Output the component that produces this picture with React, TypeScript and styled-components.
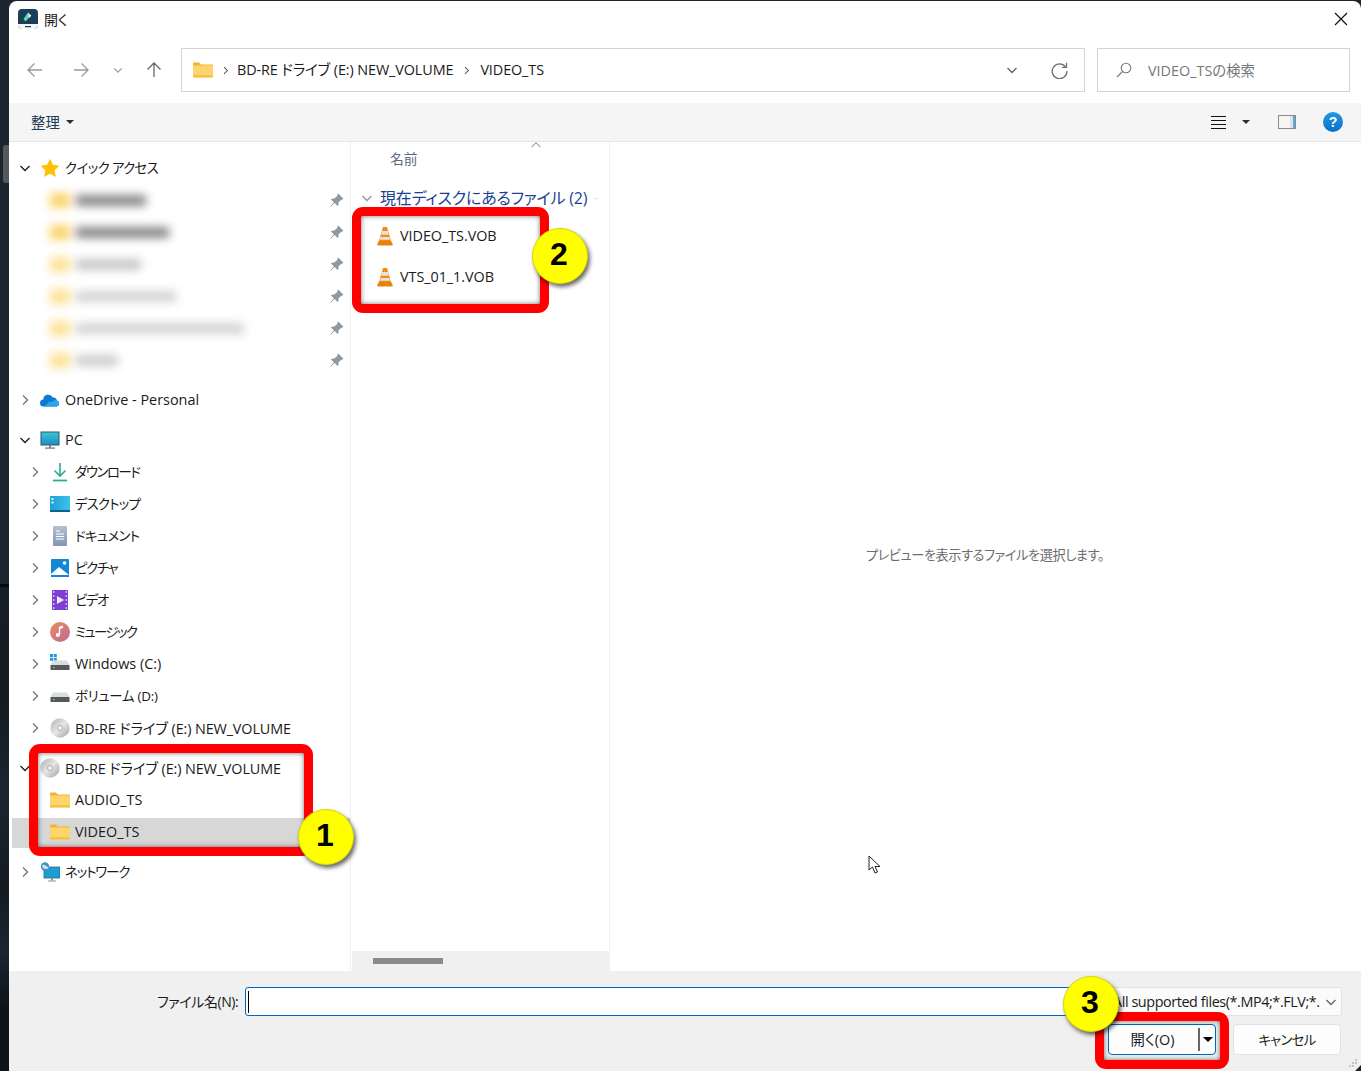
import React from "react";
import styled, { createGlobalStyle } from "styled-components";
import { BsPinAngleFill } from "react-icons/bs";

const GlobalStyle = createGlobalStyle`
  html, body {
    margin: 0;
    padding: 0;
    background: #1b2631;
  }
  body {
    font-family: "Open Sans", "Noto Sans CJK JP", sans-serif;
    font-feature-settings: "palt";
    color: #1a1a1a;
  }
`;

const Page = styled.div`
  position: relative;
  box-sizing: border-box;
  width: 1361px;
  height: 1071px;
  overflow: hidden;
  padding: 1px 0 0 9px;
  background: linear-gradient(
    to bottom,
    #1b2631 0,
    #1b2631 584px,
    #05080a 584px,
    #05080a 587px,
    #171f26 587px,
    #141b21 700px,
    #1b2631 790px,
    #141b21 890px,
    #1b2631 950px,
    #0d1319 1010px
  );
`;

const StripThumb = styled.div`
  position: absolute;
  left: 3px;
  top: 145px;
  width: 6px;
  height: 38px;
  border-radius: 3px 0 0 3px;
  background: #54595e;
`;

const Window = styled.div`
  display: flex;
  flex-direction: column;
  height: 1070px;
  background: #fff;
  border-radius: 8px 8px 0 0;
  overflow: hidden;
`;

const TitleBar = styled.div`
  display: flex;
  align-items: center;
  height: 36px;
  padding: 0 13px 0 9px;
  flex-shrink: 0;
`;

const TitleText = styled.span`
  margin-left: 6px;
  padding-bottom: 1px;
  font-size: 14px;
  flex: 1;
`;

const NavBar = styled.div`
  display: flex;
  align-items: center;
  height: 66px;
  flex-shrink: 0;
  padding: 0 11px 0 3px;
`;

const NavButton = styled.div<{ $w: number }>`
  display: flex;
  align-items: center;
  justify-content: center;
  width: ${({ $w }) => $w}px;
  height: 44px;
  flex-shrink: 0;
`;

const AddressBox = styled.div`
  display: flex;
  align-items: center;
  box-sizing: border-box;
  width: 904px;
  height: 44px;
  margin-left: 5px;
  padding: 0 16px 0 11px;
  border: 1px solid #d4d4d4;
  font-size: 14.4px;
`;

const Crumb = styled.span<{ $lift: number }>`
  white-space: nowrap;
  padding-bottom: ${({ $lift }) => $lift}px;
  letter-spacing: -0.1px;
`;

const CrumbSep = styled.span<{ $w: number }>`
  display: flex;
  width: ${({ $w }) => $w}px;
  justify-content: center;
`;

const AddressActions = styled.div`
  display: flex;
  align-items: center;
  gap: 33px;
  margin-left: auto;
`;

const SearchBox = styled.div`
  display: flex;
  align-items: center;
  box-sizing: border-box;
  width: 253px;
  height: 44px;
  margin-left: 12px;
  padding-left: 18px;
  gap: 16px;
  border: 1px solid #d4d4d4;
  font-size: 14.4px;
  color: #777;
`;

const SearchHint = styled.span`
  padding-bottom: 2px;
`;

const Toolbar = styled.div`
  display: flex;
  align-items: center;
  box-sizing: border-box;
  height: 39px;
  flex-shrink: 0;
  padding: 0 18px 0 22px;
  background: #f5f5f5;
  border-bottom: 1px solid #e6e6e6;
`;

const OrganizeLabel = styled.span`
  font-size: 14.4px;
  padding-bottom: 2px;
  color: #223a52;
`;

const Caret = styled.span<{ $color?: string; $size?: number; $before?: number; $after?: number }>`
  display: inline-block;
  width: 0;
  height: 0;
  margin-left: ${({ $before = 0 }) => $before}px;
  margin-right: ${({ $after = 0 }) => $after}px;
  border-left: ${({ $size = 4 }) => $size}px solid transparent;
  border-right: ${({ $size = 4 }) => $size}px solid transparent;
  border-top: ${({ $size = 4 }) => $size}px solid ${({ $color = "#1f3347" }) => $color};
`;

const ToolbarRight = styled.div`
  display: flex;
  align-items: center;
  margin-left: auto;
`;

const HelpSlot = styled.span`
  display: flex;
  margin-left: 27px;
`;

const Main = styled.div`
  flex: 1;
  display: flex;
  min-height: 0;
`;

const Sidebar = styled.nav`
  box-sizing: border-box;
  width: 342px;
  flex-shrink: 0;
  padding-top: 10px;
  border-right: 1px solid #f0f0f0;
`;

const Group = styled.div`
  margin-bottom: 8px;
`;

const Row = styled.div<{ $level: number; $selected?: boolean }>`
  display: flex;
  align-items: center;
  height: 32px;
  margin-left: 3px;
  padding: 0 6px 0 ${({ $level }) => ($level === 1 ? 7 : 17)}px;
  background: ${({ $selected }) =>
    $selected
      ? "linear-gradient(to bottom, transparent 2px, #d7d7d7 2px)"
      : "transparent"};
`;

const ChevronSlot = styled.span`
  display: flex;
  align-items: center;
  justify-content: center;
  width: 12px;
  height: 12px;
  margin-right: 9px;
  flex-shrink: 0;
`;

const IconSlot = styled.span`
  display: flex;
  align-items: center;
  justify-content: center;
  width: 20px;
  height: 20px;
  margin-right: 5px;
  flex-shrink: 0;
`;

const RowLabel = styled.span<{ $kana?: number; $track?: number }>`
  font-size: ${({ $kana }) => ($kana === undefined ? 14.4 : 13.4)}px;
  white-space: nowrap;
  padding-bottom: ${({ $kana, $track }) => ($kana === undefined && $track === undefined ? 1 : 2)}px;
  letter-spacing: ${({ $kana, $track = 0 }) => $kana ?? $track}px;
`;

const PinSlot = styled.span`
  display: flex;
  margin-left: auto;
  color: #8f9aa3;
`;

const BlurStack = styled.div`
  display: flex;
  align-items: center;
  gap: 6px;
  filter: blur(5px);
`;

const BlurFolder = styled.span<{ $fade: number }>`
  width: 20px;
  height: 15px;
  background: #fbd46d;
  opacity: ${({ $fade }) => $fade};
`;

const BlurText = styled.span<{ $w: number; $fade: number }>`
  width: ${({ $w }) => $w}px;
  height: 11px;
  background: #808080;
  opacity: ${({ $fade }) => $fade};
`;

const FilePanel = styled.section`
  display: flex;
  flex-direction: column;
  box-sizing: border-box;
  width: 259px;
  flex-shrink: 0;
  border-right: 1px solid #f0f0f0;
`;

const ColumnHeader = styled.div`
  position: relative;
  display: flex;
  align-items: center;
  box-sizing: border-box;
  height: 34px;
  padding: 0 0 2px 39px;
  font-size: 13.8px;
  color: #5b6b7b;
  margin-bottom: 5px;
`;

const SortMark = styled.svg`
  position: absolute;
  left: 180px;
  top: 0;
`;

const GroupHeader = styled.div`
  display: flex;
  align-items: center;
  height: 34px;
  padding-left: 10px;
  font-size: 16px;
  color: #1c3f94;
  white-space: nowrap;
`;

const GroupTitle = styled.span`
  padding-bottom: 2px;
  letter-spacing: -0.18px;
`;

const GroupRule = styled.span`
  width: 3px;
  height: 1px;
  margin-left: 8px;
  background: #dcdcdc;
`;

const GroupChevron = styled.span`
  display: flex;
  width: 12px;
  margin-right: 7px;
`;

const FileRow = styled.div`
  display: flex;
  align-items: center;
  height: 41px;
  padding-left: 26px;
  font-size: 14.4px;
`;

const FileName = styled.span`
  margin-left: 7px;
  padding-bottom: 1px;
  letter-spacing: -0.05px;
`;

const FileSpacer = styled.div`
  flex: 1;
`;

const ScrollTrack = styled.div`
  display: flex;
  align-items: center;
  height: 20px;
  margin-left: 1px;
  background: #f0f0f0;
  padding-left: 21px;
`;

const ScrollThumb = styled.div`
  width: 70px;
  height: 6px;
  background: #8a8a8a;
`;

const PreviewPane = styled.section`
  flex: 1;
  display: flex;
  align-items: center;
  justify-content: center;
  padding: 0 0 4px 5px;
  margin-right: 6px;
  font-size: 13.2px;
  letter-spacing: -0.43px;
  color: #6d6d6d;
`;

const Footer = styled.footer`
  position: relative;
  box-sizing: border-box;
  height: 100px;
  flex-shrink: 0;
  padding: 16px 19px 0 148px;
  background: #f0f0f0;
`;

const FooterRow = styled.div`
  display: flex;
  align-items: center;
  justify-content: flex-end;
`;

const FieldLabel = styled.span`
  font-size: 14px;
  margin-right: 7px;
  padding-bottom: 2px;
  letter-spacing: -0.4px;
  white-space: nowrap;
`;

const NameInput = styled.div`
  flex: 1;
  box-sizing: border-box;
  height: 29px;
  display: flex;
  align-items: center;
  padding-left: 2px;
  background: #fff;
  border: 1px solid #0067c0;
  border-radius: 3px;
`;

const TextCaret = styled.span`
  width: 1px;
  height: 22px;
  background: #000;
`;

const FilterSelect = styled.div`
  box-sizing: border-box;
  display: flex;
  align-items: center;
  width: 237px;
  height: 29px;
  margin-left: 5px;
  padding: 0 4px 0 7px;
  background: #fbfbfb;
  border: 1px solid #e2e2e2;
  border-radius: 3px;
  font-size: 14.4px;
`;

const FilterText = styled.span`
  flex: 1;
  white-space: nowrap;
  letter-spacing: -0.42px;
`;

const ButtonRow = styled(FooterRow)`
  margin-top: 8px;
  padding-right: 1px;
  gap: 17px;
`;

const DialogButton = styled.div<{ $primary?: boolean }>`
  box-sizing: border-box;
  display: flex;
  align-items: center;
  justify-content: center;
  width: 108px;
  height: 31px;
  font-size: 14.4px;
  background: #fdfdfd;
  border: 1px solid ${({ $primary }) => ($primary ? "#0067c0" : "#e2e2e2")};
  border-radius: 4px;
`;

const CancelLabel = styled.span`
  padding-bottom: 2px;
  font-size: 13.4px;
  letter-spacing: -0.7px;
`;

const SplitLabel = styled.span`
  flex: 1;
  text-align: center;
  padding: 0 2px 2px 0;
`;

const SplitPart = styled.span`
  display: flex;
  align-items: center;
  justify-content: center;
  box-sizing: border-box;
  width: 17px;
  height: 23px;
  border-left: 2px solid #666;
`;

const ResizeGrip = styled.svg`
  position: absolute;
  right: 0;
  bottom: 0;
`;

const RedFrame = styled.div<{ $x: number; $y: number; $w: number; $h: number }>`
  position: absolute;
  box-sizing: border-box;
  left: ${({ $x }) => $x}px;
  top: ${({ $y }) => $y}px;
  width: ${({ $w }) => $w}px;
  height: ${({ $h }) => $h}px;
  border: 9px solid #ff0000;
  border-radius: 11px;
  box-shadow: inset 0 0 5px rgba(0, 0, 0, 0.55);
`;

const Badge = styled.div<{ $x: number; $y: number }>`
  position: absolute;
  box-sizing: border-box;
  left: ${({ $x }) => $x}px;
  top: ${({ $y }) => $y}px;
  width: 56px;
  height: 56px;
  padding: 0 2px 3px 0;
  display: flex;
  align-items: center;
  justify-content: center;
  border-radius: 50%;
  background: #ffff00;
  border: 1px solid #d8d800;
  box-shadow: 2px 3px 4px rgba(0, 0, 0, 0.6);
  font-family: "Liberation Sans", sans-serif;
  font-weight: 700;
  font-size: 32px;
  color: #000;
`;

const MousePointer = styled.svg`
  position: absolute;
  left: 868px;
  top: 855px;
`;

const Chevron = ({ open, color = "#777", size = 12 }: { open?: boolean; color?: string; size?: number }) => (
  <svg width={size} height={size} viewBox="0 0 12 12" fill="none" stroke={color} strokeWidth="1.4">
    {open ? <path d="M1.5 4l4.5 4.5L10.500 4" /> : <path d="M4 1.500L8.500 6 4 10.500" />}
  </svg>
);

const AppLogo = () => (
  <svg width="20" height="20" viewBox="0 0 20 20">
    <rect width="20" height="20" rx="4" fill="#1d3d56" />
    <path d="M0 15h20v1a4 4 0 0 1-4 4H4a4 4 0 0 1-4-4z" fill="#f2f4f5" />
    <rect x="7" y="17" width="6" height="1.200" fill="#1d3d56" />
    <path d="M10 3.500l3 3-5.500 6-2-2.500z" fill="#58dcb9" />
    <path d="M10.500 4l2.800 2.700-2.300 2.300z" fill="#fff" />
  </svg>
);

const Folder = () => (
  <svg width="20" height="16" viewBox="0 0 20 16">
    <path d="M0 1.500A1 1 0 0 1 1 .5h5l2 2h11a1 1 0 0 1 1 1V6H0z" fill="#f4b52b" />
    <path d="M0 3.500h20v11a1 1 0 0 1-1 1H1a1 1 0 0 1-1-1z" fill="#fdd56f" />
    <path d="M0 13h20v1.500a1 1 0 0 1-1 1H1a1 1 0 0 1-1-1z" fill="#f8c146" />
  </svg>
);

const Star = () => (
  <svg width="20" height="20" viewBox="0 0 20 20">
    <path d="M10 .8l2.900 6 6.500.9-4.700 4.600 1.100 6.600L10 15.800 4.200 18.900l1.100-6.600L.6 7.700l6.500-.9z" fill="#ffc107" />
  </svg>
);

const Cloud = () => (
  <svg width="20" height="14" viewBox="0 0 20 14">
    <path d="M3.800 13.500A3.500 3.500 0 0 1 3.300 6.500 5 5 0 0 1 12.800 4.500 4 4 0 0 1 17 7.500 3.100 3.100 0 0 1 16.500 13.500z" fill="#0f78d0" />
    <path d="M3.800 13.500h12.700a3.100 3.100 0 0 0 .5-6c-2-.5-3.500 0-4.800 1.500-2-1-4.400 0-5.200 2.500-1 .5-2.200 1.500-3.200 2z" fill="#2aa7ea" />
  </svg>
);

const Monitor = () => (
  <svg width="20" height="20" viewBox="0 0 20 20">
    <defs>
      <linearGradient id="monitorFill" x1="0" y1="0" x2="0" y2="1">
        <stop offset="0" stopColor="#3cc6d8" />
        <stop offset="1" stopColor="#1a8fc0" />
      </linearGradient>
    </defs>
    <rect x="1" y="2" width="18" height="13" fill="url(#monitorFill)" stroke="#2b5a72" strokeWidth="1" />
    <rect x="9" y="15" width="2" height="3" fill="#7f8a90" />
    <rect x="5" y="17.500" width="10" height="1.200" fill="#6d767c" />
  </svg>
);

const Download = () => (
  <svg width="16" height="20" viewBox="0 0 16 20" fill="none" stroke="#25b08c" strokeWidth="1.600">
    <path d="M8 1v13M2.500 8.500L8 14l5.500-5.500" />
    <path d="M1 18.500h14" strokeWidth="1.800" />
  </svg>
);

const Desktop = () => (
  <svg width="20" height="16" viewBox="0 0 20 16">
    <defs>
      <linearGradient id="desktopFill" x1="0" y1="0" x2="1" y2="0">
        <stop offset="0" stopColor="#1c9ed8" />
        <stop offset="1" stopColor="#3dc2ea" />
      </linearGradient>
    </defs>
    <rect width="20" height="16" rx="1" fill="url(#desktopFill)" />
    <rect y="14" width="20" height="2" fill="#12608c" />
    <rect x="1.500" y="2" width="2" height="2" fill="#e8f6fc" />
    <rect x="1.500" y="5.500" width="2" height="2" fill="#e8f6fc" />
  </svg>
);

const DocIcon = () => (
  <svg width="14" height="20" viewBox="0 0 14 20">
    <defs>
      <linearGradient id="docFill" x1="0" y1="0" x2="0" y2="1">
        <stop offset="0" stopColor="#b4c0d0" />
        <stop offset="1" stopColor="#8197b5" />
      </linearGradient>
    </defs>
    <rect width="14" height="20" rx="1" fill="url(#docFill)" />
    <path d="M3 5h4M3 8h8M3 10.500h8M3 13h8" stroke="#fff" strokeWidth="1" />
  </svg>
);

const PictureIcon = () => (
  <svg width="18" height="18" viewBox="0 0 18 18">
    <rect width="18" height="18" rx="1" fill="#1586d6" />
    <circle cx="13.500" cy="4" r="1.800" fill="#fff" />
    <path d="M0 15l8-7 10 8v2H0z" fill="#fff" />
    <path d="M0 16h18v2H0z" fill="#1586d6" />
  </svg>
);

const VideoIcon = () => (
  <svg width="16" height="20" viewBox="0 0 16 20">
    <rect width="16" height="20" rx="1" fill="#7c3fd1" />
    <path d="M5 6l7 4-7 4z" fill="#f3ecff" />
    <path d="M1 2h1.500M1 6h1.500M1 10h1.500M1 14h1.500M1 18h1.500M13.500 2H15M13.500 6H15M13.500 10H15M13.500 14H15M13.500 18H15" stroke="#e5d5fb" strokeWidth="1.400" />
  </svg>
);

const MusicIcon = () => (
  <svg width="20" height="20" viewBox="0 0 20 20">
    <defs>
      <linearGradient id="musicFill" x1="0" y1="0" x2="1" y2="1">
        <stop offset="0" stopColor="#ef8a5f" />
        <stop offset="1" stopColor="#bb6a96" />
      </linearGradient>
    </defs>
    <circle cx="10" cy="10" r="10" fill="url(#musicFill)" />
    <path d="M9.500 5v7.500" stroke="#fff" strokeWidth="1.400" />
    <path d="M9.500 4.500l3.500-1v2.500l-3.500 1z" fill="#fff" />
    <circle cx="7.800" cy="13" r="2" fill="#fff" />
  </svg>
);

const DriveIcon = ({ windows }: { windows?: boolean }) => (
  <svg width="20" height="20" viewBox="0 0 20 20">
    {windows && (
      <g fill="#1b9be6">
        <rect x="0" y="0" width="3" height="3" />
        <rect x="3.800" y="0" width="3" height="3" />
        <rect x="0" y="3.800" width="3" height="3" />
        <rect x="3.800" y="3.800" width="3" height="3" />
      </g>
    )}
    <path d="M3 6.500h14l2.500 4.500H.5z" fill="#dcdcdc" />
    <rect x=".5" y="11" width="19" height="5" fill="#55595c" />
    <rect x="3" y="13" width="1.500" height="1.200" fill="#5fe05f" />
  </svg>
);

const Disc = () => (
  <svg width="20" height="20" viewBox="0 0 20 20">
    <defs>
      <linearGradient id="discFill" x1="0" y1="0" x2="1" y2="1">
        <stop offset="0" stopColor="#b0b0b0" />
        <stop offset=".5" stopColor="#e6e6e6" />
        <stop offset="1" stopColor="#a0a0a0" />
      </linearGradient>
    </defs>
    <circle cx="10" cy="10" r="9.700" fill="url(#discFill)" />
    <circle cx="10" cy="10" r="2.500" fill="#f4f4f4" stroke="#9a9a9a" strokeWidth=".8" />
  </svg>
);

const NetworkIcon = () => (
  <svg width="20" height="20" viewBox="0 0 20 20">
    <rect x="4" y="5" width="16" height="11" fill="#1d9ed2" stroke="#2b6a88" strokeWidth=".8" />
    <rect x="11" y="16" width="2" height="2.500" fill="#8b949a" />
    <rect x="8" y="18.500" width="8" height="1" fill="#8b949a" />
    <circle cx="5" cy="4.500" r="4.200" fill="#4a90c8" />
    <path d="M2 3.500c2-1.500 3-.5 4 .5s2.500.5 2.500 1.500-3 2-4.500 1-2-2-2-3.500z" fill="#cfe6f5" />
  </svg>
);

const Cone = () => (
  <svg width="16" height="20" viewBox="0 0 16 20">
    <path d="M6 1h4l4 14H2z" fill="#f58a0b" />
    <path d="M5.200 5h5.600l1 3.800H4.200z" fill="#e6e6e6" />
    <path d="M3.700 11h8.600l.8 2.800H2.900z" fill="#e6e6e6" />
    <path d="M1.800 15h12.400l1.600 3.500a1 1 0 0 1-1 1H1.200a1 1 0 0 1-1-1z" fill="#e8810c" />
  </svg>
);

const Arrow = ({ dir, color }: { dir: "left" | "right" | "up"; color: string }) => (
  <svg width="16" height="16" viewBox="0 0 16 16" fill="none" stroke={color} strokeWidth="1.300">
    {dir === "left" && <path d="M15 8H1M7.500 1.500L1 8l6.500 6.500" />}
    {dir === "right" && <path d="M1 8h14M8.500 1.500L15 8l-6.500 6.500" />}
    {dir === "up" && <path d="M8 15V1M1.500 7.500L8 1l6.500 6.500" />}
  </svg>
);

const Refresh = () => (
  <svg width="17" height="17" viewBox="0 0 17 17" fill="none" stroke="#6f6f6f" strokeWidth="1.300">
    <path d="M14.500 4.800A7.400 7.400 0 1 0 16 9" />
    <path d="M15.500 .8v4.500H11" />
  </svg>
);

const Magnifier = () => (
  <svg width="16" height="16" viewBox="0 0 16 16" fill="none" stroke="#777" strokeWidth="1.100">
    <circle cx="10" cy="6" r="4.800" />
    <path d="M6.500 9.500L1 15" />
  </svg>
);

const CloseIcon = () => (
  <svg width="14" height="14" viewBox="0 0 14 14" stroke="#111" strokeWidth="1.200">
    <path d="M1 1l12 12M13 1L1 13" />
  </svg>
);

const ViewMenu = () => (
  <svg width="15" height="14" viewBox="0 0 15 14" stroke="#111" strokeWidth="1">
    <path d="M0 1.500h15M0 5.500h15M0 9.500h15M0 13.500h15" />
  </svg>
);

const PaneIcon = () => (
  <svg width="18" height="14" viewBox="0 0 18 14">
    <rect x=".5" y=".5" width="17" height="13" fill="#f5f5f5" stroke="#8a8a8a" />
    <rect x="15" y="1" width="2" height="12" fill="#5aa8e0" />
    <rect x="12" y="1" width="3" height="12" fill="#e3e3e3" />
  </svg>
);

const HelpIcon = () => (
  <svg width="20" height="20" viewBox="0 0 20 20">
    <defs>
      <linearGradient id="helpFill" x1="0" y1="0" x2="0" y2="1">
        <stop offset="0" stopColor="#2399e4" />
        <stop offset="1" stopColor="#0b70c8" />
      </linearGradient>
    </defs>
    <circle cx="10" cy="10" r="10" fill="url(#helpFill)" />
    <text x="10" y="15" textAnchor="middle" fontSize="14" fontWeight="700" fill="#fff" fontFamily="Liberation Sans, sans-serif">?</text>
  </svg>
);

const QUICK_ITEMS = [
  { w: 70, fade: 0.95, folder: 1 },
  { w: 93, fade: 0.95, folder: 1 },
  { w: 65, fade: 0.45, folder: 0.7 },
  { w: 100, fade: 0.35, folder: 0.7 },
  { w: 168, fade: 0.35, folder: 0.7 },
  { w: 42, fade: 0.4, folder: 0.7 },
];

const PC_ITEMS: { label: string; icon: React.ReactNode; kana?: number; track?: number }[] = [
  { label: "ダウンロード", icon: <Download />, kana: -1.4 },
  { label: "デスクトップ", icon: <Desktop />, kana: -0.8 },
  { label: "ドキュメント", icon: <DocIcon />, kana: -0.65 },
  { label: "ピクチャ", icon: <PictureIcon />, kana: -1.3 },
  { label: "ビデオ", icon: <VideoIcon />, kana: -1.4 },
  { label: "ミュージック", icon: <MusicIcon />, kana: -1.6 },
  { label: "Windows (C:)", icon: <DriveIcon windows />, track: 0 },
  { label: "ボリューム (D:)", icon: <DriveIcon />, kana: -0.25 },
  { label: "BD-RE ドライブ (E:) NEW_VOLUME", icon: <Disc />, track: -0.12 },
];

const TreeRow = ({
  level,
  open,
  leaf,
  icon,
  label,
  selected,
  kana,
  track,
}: {
  level: number;
  open?: boolean;
  leaf?: boolean;
  icon: React.ReactNode;
  label: string;
  selected?: boolean;
  kana?: number;
  track?: number;
}) => (
  <Row $level={level} $selected={selected}>
    <ChevronSlot>
      {!leaf && <Chevron open={open} color={open ? "#222" : "#777"} />}
    </ChevronSlot>
    <IconSlot>{icon}</IconSlot>
    <RowLabel $kana={kana} $track={track}>{label}</RowLabel>
  </Row>
);

export default function App() {
  return (
    <Page>
      <GlobalStyle />
      <StripThumb />
      <Window>
        <TitleBar>
          <AppLogo />
          <TitleText>開く</TitleText>
          <CloseIcon />
        </TitleBar>

        <NavBar>
          <NavButton $w={46}><Arrow dir="left" color="#999" /></NavButton>
          <NavButton $w={46}><Arrow dir="right" color="#999" /></NavButton>
          <NavButton $w={28}><Chevron open color="#999" size={10} /></NavButton>
          <NavButton $w={44}><Arrow dir="up" color="#666" /></NavButton>
          <AddressBox>
            <Folder />
            <CrumbSep $w={24}><Chevron color="#555" size={9} /></CrumbSep>
            <Crumb $lift={3}>BD-RE ドライブ (E:) NEW_VOLUME</Crumb>
            <CrumbSep $w={27}><Chevron color="#555" size={9} /></CrumbSep>
            <Crumb $lift={1}>VIDEO_TS</Crumb>
            <AddressActions>
              <Chevron open color="#666" />
              <Refresh />
            </AddressActions>
          </AddressBox>
          <SearchBox>
            <Magnifier />
            <SearchHint>VIDEO_TSの検索</SearchHint>
          </SearchBox>
        </NavBar>

        <Toolbar>
          <OrganizeLabel>整理</OrganizeLabel>
          <Caret $size={4} $before={6} />
          <ToolbarRight>
            <ViewMenu />
            <Caret $size={4} $before={16} $after={28} />
            <PaneIcon />
            <HelpSlot><HelpIcon /></HelpSlot>
          </ToolbarRight>
        </Toolbar>

        <Main>
          <Sidebar>
            <Group>
              <TreeRow level={1} open icon={<Star />} label="クイック アクセス" kana={-0.6} />
              {QUICK_ITEMS.map((item, i) => (
                <Row $level={2} key={i}>
                  <ChevronSlot />
                  <BlurStack>
                    <BlurFolder $fade={item.folder} />
                    <BlurText $w={item.w} $fade={item.fade} />
                  </BlurStack>
                  <PinSlot><BsPinAngleFill size={15} /></PinSlot>
                </Row>
              ))}
            </Group>
            <Group>
              <TreeRow level={1} icon={<Cloud />} label="OneDrive - Personal" />
            </Group>
            <Group>
              <TreeRow level={1} open icon={<Monitor />} label="PC" />
              {PC_ITEMS.map((item) => (
                <TreeRow level={2} key={item.label} icon={item.icon} label={item.label} kana={item.kana} track={item.track} />
              ))}
            </Group>
            <Group>
              <TreeRow level={1} open icon={<Disc />} label="BD-RE ドライブ (E:) NEW_VOLUME" track={-0.12} />
              <TreeRow level={2} leaf icon={<Folder />} label="AUDIO_TS" />
              <TreeRow level={2} leaf selected icon={<Folder />} label="VIDEO_TS" />
            </Group>
            <TreeRow level={1} icon={<NetworkIcon />} label="ネットワーク" kana={-1.1} />
          </Sidebar>

          <FilePanel>
            <ColumnHeader>
              名前
              <SortMark width="10" height="6" viewBox="0 0 10 6" fill="none" stroke="#777">
                <path d="M.5 5L5 .8 9.500 5" />
              </SortMark>
            </ColumnHeader>
            <GroupHeader>
              <GroupChevron><Chevron open color="#999" /></GroupChevron>
              <GroupTitle>現在ディスクにあるファイル (2)</GroupTitle>
              <GroupRule />
            </GroupHeader>
            <FileRow><Cone /><FileName>VIDEO_TS.VOB</FileName></FileRow>
            <FileRow><Cone /><FileName>VTS_01_1.VOB</FileName></FileRow>
            <FileSpacer />
            <ScrollTrack><ScrollThumb /></ScrollTrack>
          </FilePanel>

          <PreviewPane>プレビューを表示するファイルを選択します。</PreviewPane>
        </Main>

        <Footer>
          <FooterRow>
            <FieldLabel>ファイル名(N):</FieldLabel>
            <NameInput><TextCaret /></NameInput>
            <FilterSelect>
              <FilterText>All supported files(*.MP4;*.FLV;*.</FilterText>
              <Chevron open color="#666" />
            </FilterSelect>
          </FooterRow>
          <ButtonRow>
            <DialogButton $primary>
              <SplitLabel>開く(O)</SplitLabel>
              <SplitPart><Caret $color="#000" $size={5} /></SplitPart>
            </DialogButton>
            <DialogButton><CancelLabel>キャンセル</CancelLabel></DialogButton>
          </ButtonRow>
          <ResizeGrip width="14" height="14" viewBox="0 0 14 14">
            <g fill="#c4c4c4">
              <rect x="8" y="2" width="2" height="2" />
              <rect x="5" y="5" width="2" height="2" />
              <rect x="8" y="5" width="2" height="2" />
              <rect x="2" y="8" width="2" height="2" />
              <rect x="5" y="8" width="2" height="2" />
            </g>
            <path d="M14 8v6H8z" fill="#222" />
          </ResizeGrip>
        </Footer>
      </Window>

      <RedFrame $x={29} $y={744} $w={284} $h={112} />
      <RedFrame $x={352} $y={207} $w={197} $h={106} />
      <RedFrame $x={1095} $y={1012} $w={134} $h={57} />
      <Badge $x={298} $y={809}>1</Badge>
      <Badge $x={532} $y={228}>2</Badge>
      <Badge $x={1063} $y={976}>3</Badge>

      <MousePointer width="13" height="20" viewBox="0 0 13 20">
        <path d="M1 1v14l3.500-3 2.500 6 2.500-1-2.500-5.500H12z" fill="#fff" stroke="#222" strokeWidth="1" />
      </MousePointer>
    </Page>
  );
}
